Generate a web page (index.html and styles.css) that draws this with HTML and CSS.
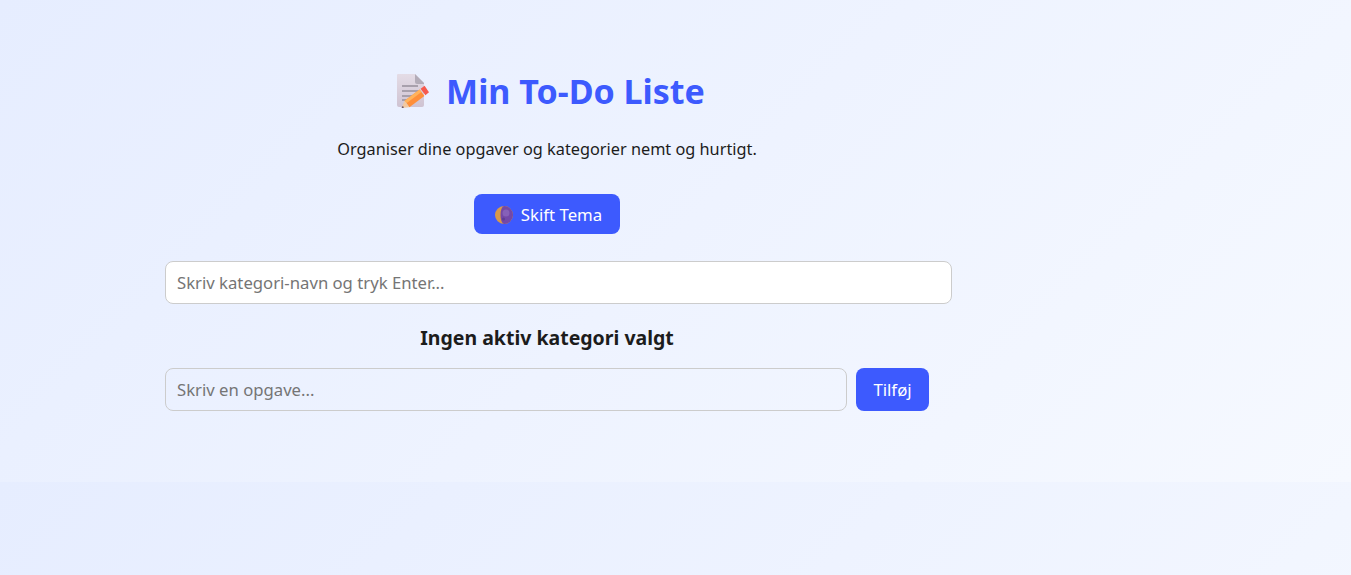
FILE: index.html
```html
<!DOCTYPE html>
<html lang="da">
<head>
    <meta charset="UTF-8">
    <meta name="viewport" content="width=device-width, initial-scale=1.0">
    <title>Min To-Do Liste</title>
    <link rel="stylesheet" href="styles.css">
</head>
<body>
    <div class="layout">
        <main class="container">
            <h1 class="titel">
                <svg class="emoji-memo" viewBox="0 0 34 34" aria-hidden="true">
                    <defs>
                        <linearGradient id="side" x1="0" y1="0" x2="0" y2="1">
                            <stop offset="0" stop-color="#e4dce6"/>
                            <stop offset="1" stop-color="#cfc3d2"/>
                        </linearGradient>
                    </defs>
                    <path d="M3 0H20L29 9V31Q29 33 27 33H4Q2 33 2 31V1Q2 0 3 0Z" fill="url(#side)"/>
                    <path d="M20 0L29 9V10H22Q20 10 20 8Z" fill="#b3acb8"/>
                    <path d="M7 12H23M7 17H24M7 22H22M7 26H13" stroke="#96909c" stroke-width="1.300" fill="none"/>
                    <path d="M9.600 26.800L24.600 15.500L29.400 21.900L14.400 33.200Z" fill="#ff8f3a"/>
                    <path d="M9.600 26.800L24.600 15.500L26.500 18L11.500 29.300Z" fill="#ffb35c"/>
                    <path d="M25.600 14.800L29.600 11.800L34 18.200L30.400 21.200Z" fill="#f65a4e"/>
                    <path d="M9.600 26.800L14.400 33.200L6.500 34Z" fill="#f3c9a0"/>
                    <path d="M7.800 32L9 33.600L6.500 34Z" fill="#4a3a55"/>
                </svg>
                <span>Min To-Do Liste</span>
            </h1>
            <p class="undertekst">Organiser dine opgaver og kategorier nemt og hurtigt.</p>
            <div class="tema-wrap">
                <button class="knap tema-knap">
                    <svg class="emoji-moon" viewBox="0 0 18 18" aria-hidden="true">
                        <circle cx="9" cy="9" r="9" fill="#d8994a"/>
                        <path d="M9 0A9 9 0 0 1 9 18A3.500 9 0 0 1 9 0Z" fill="#7348a8"/>
                        <circle cx="11" cy="7" r="3.500" fill="#8660b8"/>
                        <circle cx="8.500" cy="13" r="1.500" fill="#5f3d94"/>
                    </svg>
                    Skift Tema
                </button>
            </div>
            <input class="felt felt-kategori" type="text" placeholder="Skriv kategori-navn og tryk Enter...">
            <h3 class="aktiv-kategori">Ingen aktiv kategori valgt</h3>
            <div class="opgave-row">
                <input class="felt felt-opgave" type="text" placeholder="Skriv en opgave...">
                <button class="knap tilfoj-knap">Tilføj</button>
            </div>
        </main>
    </div>
</body>
</html>
```

FILE: styles.css
```css
body {
    margin: 0;
    font-family: "Noto Sans", "Open Sans", sans-serif;
    background: linear-gradient(135deg, #e6edff, #f6f9ff);
    color: #1c1c1c;
}

.layout {
    width: 1094px;
    height: 482px;
    padding-top: 69px;
    box-sizing: border-box;
}

.container {
    width: 764px;
    margin: 0 auto;
}

.titel {
    margin: 0;
    display: flex;
    justify-content: center;
    align-items: center;
    gap: 17px;
    height: 44px;
    padding-left: 6px;
    font-size: 34px;
    font-weight: 700;
    color: #3d5afe;
}

.emoji-memo {
    width: 34px;
    height: 34px;
}

.undertekst {
    margin: 24px 0 0;
    text-align: center;
    font-size: 16.3px;
    line-height: 24px;
}

.tema-wrap {
    margin-top: 33px;
    text-align: center;
}

.knap {
    border: none;
    border-radius: 8px;
    background: #3d5afe;
    color: white;
    font-family: inherit;
    font-size: 16.8px;
}

.tema-knap {
    width: 146px;
    height: 40px;
    padding: 1px 0 0 3px;
    display: inline-flex;
    align-items: center;
    justify-content: center;
    gap: 8px;
}

.emoji-moon {
    width: 18px;
    height: 18px;
}

.felt {
    height: 41px;
    padding: 0 10px 0 11px;
    border: 1px solid #ccc;
    border-radius: 8px;
    font-family: inherit;
    font-size: 16.7px;
}

.felt::placeholder {
    color: #757575;
}

.felt-kategori {
    display: block;
    margin-top: 27px;
    width: 100%;
    background: white;
}

.aktiv-kategori {
    margin: 20px 0 0;
    text-align: center;
    font-size: 19.5px;
    line-height: 27px;
    font-weight: 700;
}

.opgave-row {
    margin-top: 17px;
    display: flex;
    gap: 9px;
}

.felt-opgave {
    flex: 1;
    background: transparent;
}

.tilfoj-knap {
    width: 73px;
}
```
